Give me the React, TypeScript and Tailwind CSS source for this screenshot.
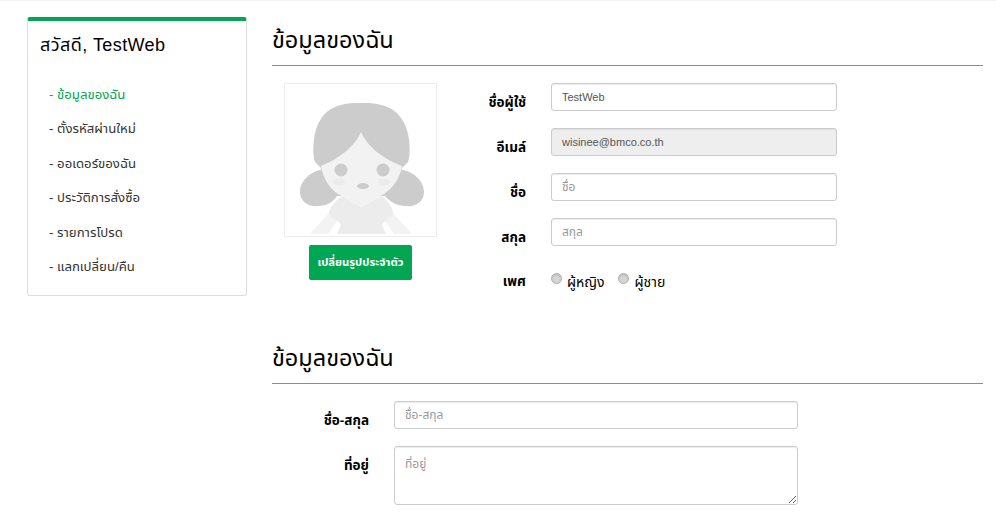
const thaiFont = 'font-["Liberation_Sans","Noto_Sans","Noto_Sans_Thai","DejaVu_Sans",sans-serif]';

const menuItems = ['ข้อมูลของฉัน', 'ตั้งรหัสผ่านใหม่', 'ออเดอร์ของฉัน', 'ประวัติการสั่งซื้อ', 'รายการโปรด', 'แลกเปลี่ยน/คืน'];

const inputClass =
  'h-[28px] px-[10px] text-[11px] placeholder:text-[12px] rounded-[3px] border border-[#cccccc] shadow-[inset_0_1px_1px_rgba(0,0,0,0.075)] text-[#555555] placeholder:text-[#999999]';

const labelClass = 'pr-[25px] text-right text-[13.5px] font-bold text-black pt-[10px] leading-[20px]';

const Avatar = () => (
  <svg className="w-[151px] h-[152px]" viewBox="0 0 151 152">
    <path d="M25 150 L44 129 L53 136 L43 150 Z" fill="#f3f3f3" />
    <path d="M127 150 L108 129 L99 136 L109 150 Z" fill="#f3f3f3" />
    <path d="M76 19 C50 18 33 27 29 55 C28 64 28 72 30 78 L36 84 L36 86 C27 87 15 96 15 108 C15 118 24 123 33 122 C42 122 48 118 52 112 L100 112 C105 118 112 122 121 122 C130 123 139 118 139 108 C139 96 127 87 117 86 L117 84 L123 78 C125 72 125 64 124 55 C120 27 102 18 76 19 Z" fill="#cccccc" />
    <path d="M57 112 L76 123 L96 112 C104 117 108 124 108 130 C103 135 99 137 97 141 L101 150 L52 150 L56 141 C54 137 48 135 44 130 C44 124 50 117 57 112 Z" fill="#ececec" />
    <path d="M76 48 C70 62 54 75 36 82 C38 94 44 104 53 110 L76 123 L99 110 C108 104 115 94 117 82 C98 75 82 62 76 48 Z" fill="#f2f2f2" />
    <circle cx="56" cy="86" r="6.5" fill="#cccccc" />
    <circle cx="98" cy="86" r="6.5" fill="#cccccc" />
    <ellipse cx="78" cy="102" rx="6" ry="3" fill="#cccccc" />
    <ellipse cx="54" cy="98" rx="6" ry="3.5" fill="#ebebeb" />
    <ellipse cx="99" cy="98" rx="6" ry="3.5" fill="#ebebeb" />
  </svg>
);

const Field = ({ label, placeholder, value, disabled }: { label: string; placeholder?: string; value?: string; disabled?: boolean }) => (
  <div className="flex items-start h-[45px]">
    <label className={`w-[102px] ${labelClass}`}>{label}</label>
    <input
      readOnly
      disabled={disabled}
      placeholder={placeholder}
      defaultValue={value}
      className={`w-[286px] ${inputClass} ${disabled ? 'bg-[#eeeeee]' : 'bg-white'}`}
    />
  </div>
);

const Radio = () => (
  <span className="w-[11px] h-[11px] rounded-full bg-[#d6d6d6] border border-[#b0b0b0] shadow-[inset_0_1px_2px_rgba(0,0,0,0.15)] mt-[-8px]" />
);

export default function App() {
  return (
    <div className={`w-[996px] h-[516px] overflow-hidden bg-white border-t border-[#f3f3f3] ${thaiFont}`}>
      <div className="flex items-start pl-[27px] pt-[16px]">
        {/* Sidebar */}
        <aside className="w-[220px] h-[279px] rounded-[3px] border border-[#dddddd] border-t-[4px] border-t-[#00a651] px-[12px]">
          <h3 className="text-[18px] tracking-[0.4px] text-black leading-[24px] mt-[12px]">สวัสดี, TestWeb</h3>
          <ul className="mt-[21px] pl-[9px]">
            {menuItems.map((item, i) => (
              <li key={item} className={`h-[34.4px] leading-[34px] text-[13.2px] ${i === 0 ? 'text-[#00a651]' : 'text-[#333333]'}`}>
                - {item}
              </li>
            ))}
          </ul>
        </aside>

        {/* Main */}
        <main className="w-[711px] ml-[25px]">
          <h2 className="text-[23.5px] text-black leading-[32px] mt-[7px] pb-[9px] border-b border-[#8c8c8c]">ข้อมูลของฉัน</h2>
          <div className="flex mt-[17px] h-[249px]">
            <div className="w-[177px] flex flex-col items-center">
              <div className="w-[153px] h-[154px] border border-[#eeeeee]">
                <Avatar />
              </div>
              <button className="mt-[8px] w-[103px] h-[35px] rounded-[2px] bg-[#00a651] text-white text-[11.25px] font-bold">เปลี่ยนรูปประจำตัว</button>
            </div>
            <div className="flex flex-col">
              <Field label="ชื่อผู้ใช้" value="TestWeb" />
              <Field label="อีเมล์" value="wisinee@bmco.co.th" disabled />
              <Field label="ชื่อ" placeholder="ชื่อ" />
              <Field label="สกุล" placeholder="สกุล" />
              <div className="flex items-center h-[28px] mt-[5px]">
                <span className="w-[102px] pr-[25px] text-right text-[13.5px] font-bold text-black">เพศ</span>
                <Radio />
                <span className="ml-[5px] text-[14px] text-black">ผู้หญิง</span>
                <span className="w-[13px]" />
                <Radio />
                <span className="ml-[6px] text-[14px] text-black">ผู้ชาย</span>
              </div>
            </div>
          </div>

          <h2 className="text-[23.5px] text-black leading-[32px] mt-[10px] pb-[9px] border-b border-[#8c8c8c]">ข้อมูลของฉัน</h2>
          <div className="flex flex-col mt-[17px]">
            <div className="flex items-start h-[45px]">
              <label className={`w-[122px] ${labelClass}`}>ชื่อ-สกุล</label>
              <input readOnly placeholder="ชื่อ-สกุล" className={`w-[404px] ${inputClass}`} />
            </div>
            <div className="flex items-start">
              <label className={`w-[122px] ${labelClass} pt-[9px]`}>ที่อยู่</label>
              <textarea readOnly placeholder="ที่อยู่" className="w-[404px] h-[59px] px-[10px] py-[8px] text-[12px] rounded-[3px] border border-[#cccccc] shadow-[inset_0_1px_1px_rgba(0,0,0,0.075)] placeholder:text-[#999999]" />
            </div>
          </div>
        </main>
      </div>
    </div>
  );
}
